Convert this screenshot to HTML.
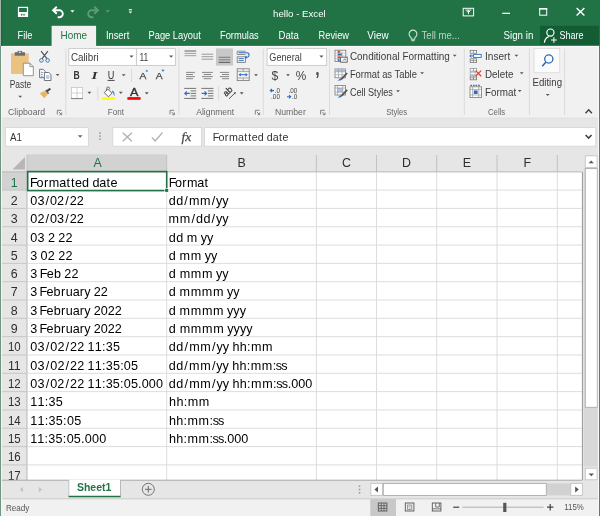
<!DOCTYPE html>
<html><head><meta charset="utf-8"><title>hello - Excel</title>
<style>
html,body{margin:0;padding:0;background:#e6e6e6;overflow:hidden}
body{width:600px;height:516px}
svg{display:block;font-family:"Liberation Sans",sans-serif;will-change:transform}
</style></head><body>
<svg width="600" height="516" viewBox="0 0 600 516">
<rect x="0" y="0" width="600" height="516" fill="#e6e6e6"/>
<rect x="0" y="0" width="600" height="46.4" fill="#217346"/>
<rect x="0" y="46.4" width="600" height="72" fill="#f1f1f1"/>
<rect x="0" y="45.9" width="600" height="1.3" fill="#fafafa"/>
<line x1="0" y1="118.2" x2="600" y2="118.2" stroke="#dcdcdc" stroke-width="0.8"/>
<rect x="540" y="25.8" width="58.9" height="19" fill="#135c34"/>
<rect x="18.5" y="7.4" width="9" height="9" fill="none" stroke="#fff" stroke-width="1.2"/>
<rect x="18.5" y="12" width="9" height="4.6" fill="#fff"/>
<rect x="20.9" y="13.9" width="1.4" height="1.6" fill="#217346"/>
<rect x="23.3" y="13.9" width="1.4" height="1.6" fill="#217346"/>
<path d="M53.3 10.3h6a3.5 3.5 0 0 1 0 7h-1.6" fill="none" stroke="#fff" stroke-width="1.9"/>
<path d="M56.8 6.8l-3.7 3.5l3.7 3.5" fill="none" stroke="#fff" stroke-width="1.9"/>
<path d="M70.30000000000001 10.25h4.2l-2.1 2.3z" fill="#fff"/>
<path d="M97.7 10.3h-6a3.5 3.5 0 0 0 0 7h1.6" fill="none" stroke="#5f9b7c" stroke-width="1.9"/>
<path d="M94.2 6.8l3.7 3.5l-3.7 3.5" fill="none" stroke="#5f9b7c" stroke-width="1.9"/>
<path d="M105.7 10.25h4.2l-2.1 2.3z" fill="#5f9b7c"/>
<rect x="128.8" y="9.2" width="3.2" height="1.1" fill="#fff"/>
<path d="M128.70000000000002 11.4h3.4l-1.7 2.2z" fill="#fff"/>
<text x="273.1" y="16.8" font-size="9.6" fill="#fff" textLength="52.6" lengthAdjust="spacingAndGlyphs">hello - Excel</text>
<rect x="463.2" y="8.3" width="10.4" height="7.6" fill="none" stroke="#fff" stroke-width="1"/>
<path d="M468.4 14.2v-3.6M466.6 12.2l1.8-1.8l1.8 1.8" fill="none" stroke="#fff" stroke-width="1"/>
<rect x="465.4" y="9.6" width="6" height="0.9" fill="#fff"/>
<line x1="502.2" y1="13.3" x2="510" y2="13.3" stroke="#fff" stroke-width="1.2"/>
<rect x="539.7" y="8.6" width="7" height="6.6" fill="none" stroke="#fff" stroke-width="1"/>
<rect x="539.2" y="8" width="8" height="1.6" fill="#fff"/>
<path d="M576.6 8l7.8 7.6M584.4 8l-7.8 7.6" fill="none" stroke="#fff" stroke-width="1.4"/>
<rect x="51.6" y="25.8" width="44.5" height="21.6" fill="#f1f1f1"/>
<text x="17.5" y="39.2" font-size="10.8" fill="#fff" textLength="15" lengthAdjust="spacingAndGlyphs">File</text>
<text x="60.5" y="39.2" font-size="10.8" fill="#217346" textLength="26.5" lengthAdjust="spacingAndGlyphs">Home</text>
<text x="105.9" y="39.2" font-size="10.8" fill="#fff" textLength="23.4" lengthAdjust="spacingAndGlyphs">Insert</text>
<text x="148.5" y="39.2" font-size="10.8" fill="#fff" textLength="52.3" lengthAdjust="spacingAndGlyphs">Page Layout</text>
<text x="220" y="39.2" font-size="10.8" fill="#fff" textLength="38.7" lengthAdjust="spacingAndGlyphs">Formulas</text>
<text x="278.6" y="39.2" font-size="10.8" fill="#fff" textLength="20.2" lengthAdjust="spacingAndGlyphs">Data</text>
<text x="318.6" y="39.2" font-size="10.8" fill="#fff" textLength="30.4" lengthAdjust="spacingAndGlyphs">Review</text>
<text x="367.3" y="39.2" font-size="10.8" fill="#fff" textLength="21.3" lengthAdjust="spacingAndGlyphs">View</text>
<path d="M410.7 37.2a3.9 3.9 0 1 1 4.6 0q-0.7 0.8 -0.7 2h-3.2q0 -1.2 -0.7 -2z" fill="none" stroke="#cfe3d7" stroke-width="1.1"/>
<line x1="411.3" y1="40.7" x2="414.7" y2="40.7" stroke="#cfe3d7" stroke-width="1.1"/>
<text x="421.6" y="39.2" font-size="10.8" fill="#b9d5c5" textLength="38.2" lengthAdjust="spacingAndGlyphs">Tell me...</text>
<text x="503.5" y="39.2" font-size="10.8" fill="#fff" textLength="29.8" lengthAdjust="spacingAndGlyphs">Sign in</text>
<circle cx="550.4" cy="32.6" r="3.6" fill="none" stroke="#fff" stroke-width="1.2"/>
<path d="M544.4 42.8q0.4-4.8 4.4-6.2" fill="none" stroke="#fff" stroke-width="1.2"/>
<path d="M551 40h5.8M553.9 37.1v5.8" fill="none" stroke="#fff" stroke-width="1"/>
<text x="559.5" y="39.2" font-size="10.8" fill="#fff" textLength="24" lengthAdjust="spacingAndGlyphs">Share</text>
<line x1="65.8" y1="48.8" x2="65.8" y2="115" stroke="#d8d8d8" stroke-width="0.9"/>
<line x1="178.9" y1="48.8" x2="178.9" y2="115" stroke="#d8d8d8" stroke-width="0.9"/>
<line x1="263.3" y1="48.8" x2="263.3" y2="115" stroke="#d8d8d8" stroke-width="0.9"/>
<line x1="329.5" y1="48.8" x2="329.5" y2="115" stroke="#d8d8d8" stroke-width="0.9"/>
<line x1="464.3" y1="48.8" x2="464.3" y2="115" stroke="#d8d8d8" stroke-width="0.9"/>
<line x1="529.4" y1="48.8" x2="529.4" y2="115" stroke="#d8d8d8" stroke-width="0.9"/>
<line x1="564.6" y1="48.8" x2="564.6" y2="115" stroke="#d8d8d8" stroke-width="0.9"/>
<rect x="11" y="53.2" width="17.7" height="20.8" fill="#eac282"/>
<rect x="14.7" y="52.2" width="10.3" height="3.5" fill="#6d6d6d"/>
<rect x="17.6" y="50.9" width="4.5" height="2.4" fill="#6d6d6d"/>
<rect x="18.9" y="51.7" width="1.9" height="1.2" fill="#f1f1f1"/>
<path d="M23.3 63.2h6.6l3.4 3.4v9.1h-10z" fill="#fff" stroke="#8a8a8a" stroke-width="0.9"/>
<path d="M29.9 63.2v3.4h3.4" fill="none" stroke="#8a8a8a" stroke-width="0.9"/>
<text x="9.7" y="87.5" font-size="10.5" fill="#3c3c3c" textLength="21.6" lengthAdjust="spacingAndGlyphs">Paste</text>
<path d="M18.3 95.65h3.8l-1.9 2.1z" fill="#555"/>
<path d="M41.1 51.2l6 7.6M47.9 51.2l-6 7.6" fill="none" stroke="#555" stroke-width="1.2"/>
<circle cx="41.4" cy="60.4" r="1.8" fill="none" stroke="#3a76c0" stroke-width="1"/>
<circle cx="47.6" cy="60.4" r="1.8" fill="none" stroke="#3a76c0" stroke-width="1"/>
<path d="M39.6 69.3h3.6l2 2v6.4h-5.6z" fill="#fff" stroke="#666" stroke-width="0.9"/>
<path d="M44.4 72.5h4.4l2.2 2.2v5.8h-6.6z" fill="#fff" stroke="#666" stroke-width="0.9"/>
<path d="M40.9 72.4h2.4M40.9 74.4h1.8M40.9 76.3h1.8M46 76h3.4M46 77.9h3.4" fill="none" stroke="#3a76c0" stroke-width="0.7"/>
<path d="M55.7 73.95h3.8l-1.9 2.1z" fill="#555"/>
<path d="M39.8 93.2l5.2-2.4l2.6 3.8l-3.4 3.6z" fill="#eab65a"/>
<path d="M45.2 90.4l1.4-0.9l2.6 3.8l-1.3 1z" fill="#666"/>
<path d="M46.8 91.2l3.6-2.6" fill="none" stroke="#444" stroke-width="2"/>
<text x="8" y="114.6" font-size="9.0" fill="#666" textLength="37.2" lengthAdjust="spacingAndGlyphs">Clipboard</text>
<path d="M61.5 110.3h-4.2v4.2" fill="none" stroke="#777" stroke-width="0.9"/>
<path d="M58.9 111.89999999999999l2.6 2.6M61.699999999999996 112.5v2.2h-2.2" fill="none" stroke="#777" stroke-width="0.9"/>
<rect x="68.8" y="48.6" width="67.6" height="16.8" fill="#fff" stroke="#c8c8c8" stroke-width="0.9"/>
<rect x="136.4" y="48.6" width="39" height="16.8" fill="#fff" stroke="#c8c8c8" stroke-width="0.9"/>
<text x="70.9" y="60.7" font-size="10.2" fill="#3c3c3c" textLength="27.8" lengthAdjust="spacingAndGlyphs">Calibri</text>
<path d="M129.5 55.5h4l-2.0 2.2z" fill="#555"/>
<text x="139.5" y="60.7" font-size="10.2" fill="#3c3c3c" textLength="8.8" lengthAdjust="spacingAndGlyphs">11</text>
<path d="M169.1 55.5h4l-2.0 2.2z" fill="#555"/>
<text x="73.6" y="78.9" font-size="10.6" fill="#333" textLength="6.2" lengthAdjust="spacingAndGlyphs" font-weight="bold">B</text>
<text x="91.6" y="78.9" font-size="10.8" fill="#333" font-weight="bold" font-style="italic" font-family="Liberation Serif,serif" textLength="6" lengthAdjust="spacingAndGlyphs">I</text>
<text x="107.8" y="78.9" font-size="10.4" fill="#333" textLength="6.6" lengthAdjust="spacingAndGlyphs">U</text>
<line x1="107.6" y1="80.4" x2="114.6" y2="80.4" stroke="#333" stroke-width="0.9"/>
<path d="M121.8 74.15h3.8l-1.9 2.1z" fill="#555"/>
<line x1="131.5" y1="68.6" x2="131.5" y2="82" stroke="#d8d8d8" stroke-width="0.9"/>
<text x="139.5" y="78.9" font-size="9.8" fill="#444" textLength="6.9" lengthAdjust="spacingAndGlyphs" stroke="#444" stroke-width="0.25">A</text>
<path d="M145.4 71.5l1.4-2l1.4 2z" fill="#2b6cc4"/>
<text x="155.8" y="79.2" font-size="9.2" fill="#444" textLength="6.9" lengthAdjust="spacingAndGlyphs" stroke="#444" stroke-width="0.25">A</text>
<path d="M161.3 69.8h3.3l-1.65 1.9z" fill="#2b6cc4"/>
<rect x="71.4" y="87.4" width="11.2" height="11.2" fill="#fff" stroke="#c6c6c6" stroke-width="0.8"/>
<path d="M77 87.4v11.2M71.4 93h11.2" fill="none" stroke="#c6c6c6" stroke-width="0.8"/>
<line x1="71" y1="98.6" x2="83" y2="98.6" stroke="#777" stroke-width="0.9"/>
<path d="M87.5 91.85000000000001h3.8l-1.9 2.1z" fill="#555"/>
<line x1="97.8" y1="86.6" x2="97.8" y2="100.2" stroke="#d8d8d8" stroke-width="0.9"/>
<path d="M107.8 89l4.2 4.2l-3.6 3.6l-4.2-4.2z" fill="#fff" stroke="#555" stroke-width="0.9"/>
<path d="M106.6 91v-2.4q0-1.6 1.5-1.6q1.5 0 1.5 1.6v0.8" fill="none" stroke="#555" stroke-width="0.8"/>
<path d="M112.6 90.4q2.8 2.4 1.6 5.8q-0.4-3.2-2.2-4.4z" fill="#2b6cc4"/>
<rect x="101.9" y="97.1" width="13.2" height="2.7" fill="#ffff00"/>
<path d="M118.89999999999999 91.85000000000001h3.8l-1.9 2.1z" fill="#555"/>
<text x="130" y="95.7" font-size="10.8" fill="#333" textLength="8.4" lengthAdjust="spacingAndGlyphs" stroke="#333" stroke-width="0.35">A</text>
<rect x="127.4" y="97.1" width="13.2" height="2.7" fill="#ff0000"/>
<path d="M144.9 92.35000000000001h3.8l-1.9 2.1z" fill="#555"/>
<text x="107.8" y="114.6" font-size="9.0" fill="#666" textLength="16.1" lengthAdjust="spacingAndGlyphs">Font</text>
<path d="M174.2 110.3h-4.2v4.2" fill="none" stroke="#777" stroke-width="0.9"/>
<path d="M171.6 111.89999999999999l2.6 2.6M174.4 112.5v2.2h-2.2" fill="none" stroke="#777" stroke-width="0.9"/>
<line x1="184.5" y1="51" x2="196.2" y2="51" stroke="#555" stroke-width="0.9"/>
<line x1="184.5" y1="53.4" x2="196.2" y2="53.4" stroke="#8a8a8a" stroke-width="0.8"/>
<line x1="184.5" y1="55.7" x2="196.2" y2="55.7" stroke="#8a8a8a" stroke-width="0.8"/>
<line x1="201.6" y1="54.2" x2="213.2" y2="54.2" stroke="#8a8a8a" stroke-width="0.85"/>
<line x1="201.6" y1="56.7" x2="213.2" y2="56.7" stroke="#8a8a8a" stroke-width="0.85"/>
<line x1="201.6" y1="59.2" x2="213.2" y2="59.2" stroke="#8a8a8a" stroke-width="0.85"/>
<rect x="216" y="48.4" width="17" height="17.2" fill="#c8c8c8"/>
<line x1="218.7" y1="57.3" x2="230.3" y2="57.3" stroke="#666" stroke-width="0.8"/>
<line x1="218.7" y1="59.8" x2="230.3" y2="59.8" stroke="#666" stroke-width="0.8"/>
<line x1="218.7" y1="62.3" x2="230.3" y2="62.3" stroke="#444" stroke-width="0.9"/>
<path d="M245.6 51.2h-8.4v3.3h8.4" fill="none" stroke="#777" stroke-width="0.8"/>
<rect x="237.2" y="56.8" width="8.4" height="5.7" fill="none" stroke="#777" stroke-width="0.8"/>
<path d="M238.6 52.8h8.2a2.2 2.2 0 0 1 0 4.5h-1.2" fill="none" stroke="#2b6cc4" stroke-width="1.1"/>
<path d="M246.6 55.6l-2 1.7l2 1.7z" fill="#2b6cc4"/>
<path d="M238.6 58.6h5.2M238.6 60.6h5.2" fill="none" stroke="#2b6cc4" stroke-width="0.9"/>
<line x1="186.1" y1="72.4" x2="194.9" y2="72.4" stroke="#7a7a7a" stroke-width="0.9"/>
<line x1="186.1" y1="74.5" x2="193" y2="74.5" stroke="#7a7a7a" stroke-width="0.9"/>
<line x1="186.1" y1="76.6" x2="194.9" y2="76.6" stroke="#7a7a7a" stroke-width="0.9"/>
<line x1="186.1" y1="78.7" x2="193" y2="78.7" stroke="#7a7a7a" stroke-width="0.9"/>
<line x1="202" y1="72.4" x2="212.8" y2="72.4" stroke="#7a7a7a" stroke-width="0.9"/>
<line x1="203.6" y1="74.5" x2="211.2" y2="74.5" stroke="#7a7a7a" stroke-width="0.9"/>
<line x1="202" y1="76.6" x2="212.8" y2="76.6" stroke="#7a7a7a" stroke-width="0.9"/>
<line x1="203.6" y1="78.7" x2="211.2" y2="78.7" stroke="#7a7a7a" stroke-width="0.9"/>
<line x1="219.9" y1="72.4" x2="229.1" y2="72.4" stroke="#7a7a7a" stroke-width="0.9"/>
<line x1="222" y1="74.5" x2="229.1" y2="74.5" stroke="#7a7a7a" stroke-width="0.9"/>
<line x1="219.9" y1="76.6" x2="229.1" y2="76.6" stroke="#7a7a7a" stroke-width="0.9"/>
<line x1="222" y1="78.7" x2="229.1" y2="78.7" stroke="#7a7a7a" stroke-width="0.9"/>
<rect x="237.2" y="68.8" width="12" height="11.8" fill="none" stroke="#777" stroke-width="0.8"/>
<path d="M237.2 71.4h12M237.2 78h12M243.2 68.8v2.6M243.2 78v2.6" fill="none" stroke="#888" stroke-width="0.7"/>
<path d="M239.6 74.7h7.2" fill="none" stroke="#2b6cc4" stroke-width="1"/>
<path d="M240.8 72.9l-2.2 1.8l2.2 1.8zM245.6 72.9l2.2 1.8l-2.2 1.8z" fill="#2b6cc4"/>
<path d="M254.1 74.25h3.8l-1.9 2.1z" fill="#555"/>
<line x1="184.2" y1="88.4" x2="196.2" y2="88.4" stroke="#666" stroke-width="0.9"/>
<line x1="184.2" y1="98.4" x2="196.2" y2="98.4" stroke="#666" stroke-width="0.9"/>
<line x1="190.7" y1="90.9" x2="196.2" y2="90.9" stroke="#666" stroke-width="0.9"/>
<line x1="190.7" y1="93.4" x2="196.2" y2="93.4" stroke="#666" stroke-width="0.9"/>
<line x1="190.7" y1="95.9" x2="196.2" y2="95.9" stroke="#666" stroke-width="0.9"/>
<path d="M184.79999999999998 93.4h5M186.79999999999998 91.4l-2 2l2 2" fill="none" stroke="#2b6cc4" stroke-width="1.1"/>
<line x1="201.4" y1="88.4" x2="213.4" y2="88.4" stroke="#666" stroke-width="0.9"/>
<line x1="201.4" y1="98.4" x2="213.4" y2="98.4" stroke="#666" stroke-width="0.9"/>
<line x1="207.9" y1="90.9" x2="213.4" y2="90.9" stroke="#666" stroke-width="0.9"/>
<line x1="207.9" y1="93.4" x2="213.4" y2="93.4" stroke="#666" stroke-width="0.9"/>
<line x1="207.9" y1="95.9" x2="213.4" y2="95.9" stroke="#666" stroke-width="0.9"/>
<path d="M201.70000000000002 93.4h5M204.6 91.4l2 2l-2 2" fill="none" stroke="#2b6cc4" stroke-width="1.1"/>
<line x1="218.7" y1="86.4" x2="218.7" y2="100.6" stroke="#d8d8d8" stroke-width="0.9"/>
<text x="0" y="0" font-size="8.8" fill="#333" stroke="#333" stroke-width="0.25" transform="translate(226.3,97) rotate(-45)">ab</text>
<path d="M229 98.8l6.4-6.2" fill="none" stroke="#555" stroke-width="1"/>
<path d="M235.9 92.1l-2.4 0.6l1.8 1.8z" fill="#555"/>
<path d="M239.79999999999998 92.35000000000001h3.8l-1.9 2.1z" fill="#555"/>
<text x="196.2" y="114.6" font-size="9.0" fill="#666" textLength="38" lengthAdjust="spacingAndGlyphs">Alignment</text>
<path d="M259.5 110.3h-4.2v4.2" fill="none" stroke="#777" stroke-width="0.9"/>
<path d="M256.90000000000003 111.89999999999999l2.6 2.6M259.7 112.5v2.2h-2.2" fill="none" stroke="#777" stroke-width="0.9"/>
<rect x="267.1" y="48.6" width="59.5" height="16.8" fill="#fff" stroke="#c8c8c8" stroke-width="0.9"/>
<text x="269.3" y="60.7" font-size="10.2" fill="#3c3c3c" textLength="32.6" lengthAdjust="spacingAndGlyphs">General</text>
<path d="M319.4 55.5h4l-2.0 2.2z" fill="#555"/>
<text x="271.6" y="79.9" font-size="13.2" fill="#444" textLength="6.8" lengthAdjust="spacingAndGlyphs">$</text>
<path d="M286.1 74.25h3.8l-1.9 2.1z" fill="#555"/>
<text x="295.7" y="79.6" font-size="12.2" fill="#444" textLength="10.5" lengthAdjust="spacingAndGlyphs">%</text>
<text x="315.3" y="75.2" font-size="17.5" fill="#444" textLength="4.4" lengthAdjust="spacingAndGlyphs" font-weight="bold">,</text>
<text x="274.6" y="92.9" font-size="6.7" fill="#444" textLength="5.4" lengthAdjust="spacingAndGlyphs">.0</text>
<text x="271" y="98.8" font-size="6.7" fill="#444" textLength="9" lengthAdjust="spacingAndGlyphs">.00</text>
<path d="M270.4 90.6h3.6M272 89l-1.7 1.6l1.7 1.6" fill="none" stroke="#2b6cc4" stroke-width="1.1"/>
<text x="288.6" y="92.9" font-size="6.7" fill="#444" textLength="8.8" lengthAdjust="spacingAndGlyphs">.00</text>
<text x="292" y="98.8" font-size="6.7" fill="#444" textLength="5.4" lengthAdjust="spacingAndGlyphs">.0</text>
<path d="M287 96.8h3.6M289 95.2l1.7 1.6l-1.7 1.6" fill="none" stroke="#2b6cc4" stroke-width="1.1"/>
<text x="275" y="114.6" font-size="9.0" fill="#666" textLength="30.8" lengthAdjust="spacingAndGlyphs">Number</text>
<path d="M324.8 110.3h-4.2v4.2" fill="none" stroke="#777" stroke-width="0.9"/>
<path d="M322.20000000000005 111.89999999999999l2.6 2.6M325.0 112.5v2.2h-2.2" fill="none" stroke="#777" stroke-width="0.9"/>
<rect x="335" y="50.2" width="10.8" height="11.4" fill="#fff" stroke="#777" stroke-width="0.8"/>
<path d="M337.7 50.2v11.4M342.1 50.2v11.4M335 53.05h10.8M335 55.9h10.8M335 58.75h10.8" fill="none" stroke="#a0a0a0" stroke-width="0.6"/>
<rect x="337.9" y="50.7" width="2.4" height="2" fill="#e2452b"/>
<rect x="337.9" y="53.5" width="3.9" height="2" fill="#2b6cc4"/>
<rect x="337.9" y="56.4" width="2.4" height="2" fill="#e2452b"/>
<rect x="337.9" y="59.2" width="1.8" height="2" fill="#2b6cc4"/>
<rect x="340.6" y="57.2" width="6.6" height="5" fill="#fff" stroke="#555" stroke-width="0.9"/>
<path d="M342.6 60.6l2.6-1.8M345.2 58.8v1.8" fill="none" stroke="#555" stroke-width="0.7"/>
<rect x="335" y="69" width="10.4" height="8.8" fill="#fff" stroke="#777" stroke-width="0.8"/>
<rect x="335.3" y="69.3" width="9.8" height="2.4" fill="#a9c4e6"/>
<path d="M338.5 69v8.8M342 69v8.8M335 71.8h10.4M335 74.8h10.4" fill="none" stroke="#999" stroke-width="0.7"/>
<path d="M340 80.8l1.4-3l5.2-5.4l1.2 1.2l-5 5.4z" fill="#555"/>
<path d="M337.6 81l2.6-2.8l1.6 1.6z" fill="#2b6cc4"/>
<rect x="335" y="85.4" width="10.4" height="9.6" fill="#fff" stroke="#777" stroke-width="0.8"/>
<rect x="337.6" y="88" width="5.2" height="4.2" fill="#a9c4e6"/>
<path d="M337.6 85.4v9.6M342.8 85.4v9.6M335 88h10.4M335 92.2h10.4" fill="none" stroke="#999" stroke-width="0.7"/>
<path d="M340 97.6l1.4-3l5.2-5.4l1.2 1.2l-5 5.4z" fill="#555"/>
<path d="M337.6 98l2.6-2.8l1.6 1.6z" fill="#2b6cc4"/>
<text x="349.9" y="60" font-size="10.3" fill="#3c3c3c" textLength="100" lengthAdjust="spacingAndGlyphs">Conditional Formatting</text>
<path d="M452.8 54.650000000000006h3.8l-1.9 2.1z" fill="#555"/>
<text x="349.9" y="77.8" font-size="10.3" fill="#3c3c3c" textLength="67" lengthAdjust="spacingAndGlyphs">Format as Table</text>
<path d="M420.20000000000005 72.25h3.8l-1.9 2.1z" fill="#555"/>
<text x="349.9" y="95.6" font-size="10.3" fill="#3c3c3c" textLength="42.9" lengthAdjust="spacingAndGlyphs">Cell Styles</text>
<path d="M396.1 90.25h3.8l-1.9 2.1z" fill="#555"/>
<text x="386.2" y="114.6" font-size="9.0" fill="#666" textLength="20.9" lengthAdjust="spacingAndGlyphs">Styles</text>
<rect x="470.2" y="50.4" width="6.4" height="2.8" fill="#fff" stroke="#777" stroke-width="0.8"/>
<rect x="473.6" y="54.4" width="7.6" height="3" fill="#fff" stroke="#2b6cc4" stroke-width="0.9"/>
<path d="M469.8 55.9h3.4M471.4 54.4l-1.6 1.5l1.6 1.5" fill="none" stroke="#2b6cc4" stroke-width="1"/>
<rect x="470.2" y="58.8" width="6.4" height="3.6" fill="#fff" stroke="#777" stroke-width="0.8"/>
<path d="M473.4 50.4v2.8M473.4 58.8v3.6M470.2 60.6h6.4" fill="none" stroke="#777" stroke-width="0.7"/>
<rect x="470.2" y="68.4" width="6.4" height="2.8" fill="#fff" stroke="#999" stroke-width="0.8"/>
<rect x="470.2" y="72.2" width="5" height="2.6" fill="#fff" stroke="#9ab" stroke-width="0.8"/>
<rect x="470.2" y="76" width="6.4" height="3.8" fill="#fff" stroke="#777" stroke-width="0.8"/>
<path d="M473.4 76v3.8M470.2 77.9h6.4M473.4 68.4v2.8" fill="none" stroke="#777" stroke-width="0.7"/>
<path d="M475.6 70.6l5.6 5.6M481.2 70.6l-5.6 5.6" fill="none" stroke="#e2452b" stroke-width="1.3"/>
<path d="M470.4 85.4h9.6" fill="none" stroke="#2b6cc4" stroke-width="1.2" stroke-dasharray="1.6 1"/>
<rect x="470" y="86.8" width="11.4" height="10.8" fill="#fff" stroke="#777" stroke-width="0.8"/>
<path d="M472.6 86.8v10.8M478.8 86.8v10.8M470 89.4h11.4M470 95h11.4" fill="none" stroke="#999" stroke-width="0.7"/>
<rect x="473.8" y="90.4" width="3.8" height="3.6" fill="#2b6cc4"/>
<text x="485" y="60" font-size="10.3" fill="#3c3c3c" textLength="25.2" lengthAdjust="spacingAndGlyphs">Insert</text>
<path d="M514.5 54.650000000000006h3.8l-1.9 2.1z" fill="#555"/>
<text x="485" y="77.8" font-size="10.3" fill="#3c3c3c" textLength="28.4" lengthAdjust="spacingAndGlyphs">Delete</text>
<path d="M519.8000000000001 72.25h3.8l-1.9 2.1z" fill="#555"/>
<text x="485" y="95.6" font-size="10.3" fill="#3c3c3c" textLength="31.2" lengthAdjust="spacingAndGlyphs">Format</text>
<path d="M517.8000000000001 89.95h3.8l-1.9 2.1z" fill="#555"/>
<text x="488" y="114.6" font-size="9.0" fill="#666" textLength="17.2" lengthAdjust="spacingAndGlyphs">Cells</text>
<rect x="534" y="48.5" width="25.7" height="24.2" fill="#fbfbfb" stroke="#dcdcdc" stroke-width="0.9"/>
<circle cx="548.8" cy="59" r="4.1" fill="none" stroke="#2b66b0" stroke-width="1.3"/>
<line x1="545.8" y1="62.2" x2="542.2" y2="66.2" stroke="#2b66b0" stroke-width="1.5"/>
<text x="532.5" y="86.3" font-size="10.2" fill="#3c3c3c" textLength="29.5" lengthAdjust="spacingAndGlyphs">Editing</text>
<path d="M545.8000000000001 93.95h3.8l-1.9 2.1z" fill="#555"/>
<path d="M585.5 113.2l3.2-3.4l3.2 3.4" fill="none" stroke="#444" stroke-width="1.5"/>
<rect x="5.4" y="127.6" width="83" height="18.6" fill="#fff" stroke="#d6d6d6" stroke-width="0.9"/>
<text x="10" y="140.5" font-size="10.6" fill="#333" textLength="12" lengthAdjust="spacingAndGlyphs">A1</text>
<path d="M77.9 135.25h4.6l-2.3 2.5z" fill="#666"/>
<rect x="99.3" y="132.25" width="1.5" height="1.5" fill="#959595"/>
<rect x="99.3" y="135.35" width="1.5" height="1.5" fill="#959595"/>
<rect x="99.3" y="138.45" width="1.5" height="1.5" fill="#959595"/>
<rect x="112.8" y="127.6" width="88.8" height="18.6" fill="#fff" stroke="#d6d6d6" stroke-width="0.9"/>
<path d="M122.7 132.7l9.2 8.6M131.9 132.7l-9.2 8.6" fill="none" stroke="#b0b0b0" stroke-width="1.3"/>
<path d="M151.9 137.4l3.2 3.6l7.4-8.4" fill="none" stroke="#b0b0b0" stroke-width="1.4"/>
<text x="181.6" y="140.6" font-size="12.5" fill="#4a4a4a" stroke="#4a4a4a" stroke-width="0.25" font-style="italic" font-family="Liberation Serif,serif" textLength="9.8" lengthAdjust="spacingAndGlyphs">fx</text>
<rect x="204.4" y="127.6" width="391.4" height="18.6" fill="#fff" stroke="#d6d6d6" stroke-width="0.9"/>
<text y="140.6" font-size="10.7" fill="#333" x="212.72 218.41 224.81 228.94 238.01 244.33 248.31 251.76 257.84 263.79 266.76 272.72 279.05 282.5">Formatted date</text>
<path d="M585.6 135l3 3l3-3" fill="none" stroke="#444" stroke-width="1.6"/>
<rect x="1.6" y="154.3" width="581" height="17.7" fill="#e6e6e6"/>
<rect x="27" y="172" width="555.4" height="308.0" fill="#fff"/>
<rect x="27" y="154.3" width="139.7" height="17.7" fill="#d2d2d2"/>
<rect x="1.6" y="172.2" width="25.4" height="18.12" fill="#d2d2d2"/>
<path d="M25 157v12.6h-12.6z" fill="#b6b6b6"/>
<line x1="166.7" y1="155" x2="166.7" y2="172" stroke="#bdbdbd" stroke-width="0.9"/>
<line x1="316.4" y1="155" x2="316.4" y2="172" stroke="#bdbdbd" stroke-width="0.9"/>
<line x1="376.5" y1="155" x2="376.5" y2="172" stroke="#bdbdbd" stroke-width="0.9"/>
<line x1="436.7" y1="155" x2="436.7" y2="172" stroke="#bdbdbd" stroke-width="0.9"/>
<line x1="497.0" y1="155" x2="497.0" y2="172" stroke="#bdbdbd" stroke-width="0.9"/>
<line x1="557.3" y1="155" x2="557.3" y2="172" stroke="#bdbdbd" stroke-width="0.9"/>
<line x1="27" y1="155" x2="27" y2="172" stroke="#bdbdbd" stroke-width="0.9"/>
<line x1="1.6" y1="171.9" x2="582.4" y2="171.9" stroke="#b0b0b0" stroke-width="0.9"/>
<line x1="27" y1="172" x2="27" y2="480.0" stroke="#b0b0b0" stroke-width="0.9"/>
<line x1="166.7" y1="172.4" x2="166.7" y2="480.0" stroke="#d9d9d9" stroke-width="0.9"/>
<line x1="316.4" y1="172.4" x2="316.4" y2="480.0" stroke="#d9d9d9" stroke-width="0.9"/>
<line x1="376.5" y1="172.4" x2="376.5" y2="480.0" stroke="#d9d9d9" stroke-width="0.9"/>
<line x1="436.7" y1="172.4" x2="436.7" y2="480.0" stroke="#d9d9d9" stroke-width="0.9"/>
<line x1="497.0" y1="172.4" x2="497.0" y2="480.0" stroke="#d9d9d9" stroke-width="0.9"/>
<line x1="557.3" y1="172.4" x2="557.3" y2="480.0" stroke="#d9d9d9" stroke-width="0.9"/>
<line x1="1.6" y1="190.1" x2="27" y2="190.1" stroke="#c4c4c4" stroke-width="0.9"/>
<line x1="27" y1="190.1" x2="582.4" y2="190.1" stroke="#d9d9d9" stroke-width="0.9"/>
<line x1="1.6" y1="208.42" x2="27" y2="208.42" stroke="#c4c4c4" stroke-width="0.9"/>
<line x1="27" y1="208.42" x2="582.4" y2="208.42" stroke="#d9d9d9" stroke-width="0.9"/>
<line x1="1.6" y1="226.74" x2="27" y2="226.74" stroke="#c4c4c4" stroke-width="0.9"/>
<line x1="27" y1="226.74" x2="582.4" y2="226.74" stroke="#d9d9d9" stroke-width="0.9"/>
<line x1="1.6" y1="245.06" x2="27" y2="245.06" stroke="#c4c4c4" stroke-width="0.9"/>
<line x1="27" y1="245.06" x2="582.4" y2="245.06" stroke="#d9d9d9" stroke-width="0.9"/>
<line x1="1.6" y1="263.38" x2="27" y2="263.38" stroke="#c4c4c4" stroke-width="0.9"/>
<line x1="27" y1="263.38" x2="582.4" y2="263.38" stroke="#d9d9d9" stroke-width="0.9"/>
<line x1="1.6" y1="281.7" x2="27" y2="281.7" stroke="#c4c4c4" stroke-width="0.9"/>
<line x1="27" y1="281.7" x2="582.4" y2="281.7" stroke="#d9d9d9" stroke-width="0.9"/>
<line x1="1.6" y1="300.02" x2="27" y2="300.02" stroke="#c4c4c4" stroke-width="0.9"/>
<line x1="27" y1="300.02" x2="582.4" y2="300.02" stroke="#d9d9d9" stroke-width="0.9"/>
<line x1="1.6" y1="318.34000000000003" x2="27" y2="318.34000000000003" stroke="#c4c4c4" stroke-width="0.9"/>
<line x1="27" y1="318.34000000000003" x2="582.4" y2="318.34000000000003" stroke="#d9d9d9" stroke-width="0.9"/>
<line x1="1.6" y1="336.65999999999997" x2="27" y2="336.65999999999997" stroke="#c4c4c4" stroke-width="0.9"/>
<line x1="27" y1="336.65999999999997" x2="582.4" y2="336.65999999999997" stroke="#d9d9d9" stroke-width="0.9"/>
<line x1="1.6" y1="354.98" x2="27" y2="354.98" stroke="#c4c4c4" stroke-width="0.9"/>
<line x1="27" y1="354.98" x2="582.4" y2="354.98" stroke="#d9d9d9" stroke-width="0.9"/>
<line x1="1.6" y1="373.29999999999995" x2="27" y2="373.29999999999995" stroke="#c4c4c4" stroke-width="0.9"/>
<line x1="27" y1="373.29999999999995" x2="582.4" y2="373.29999999999995" stroke="#d9d9d9" stroke-width="0.9"/>
<line x1="1.6" y1="391.62" x2="27" y2="391.62" stroke="#c4c4c4" stroke-width="0.9"/>
<line x1="27" y1="391.62" x2="582.4" y2="391.62" stroke="#d9d9d9" stroke-width="0.9"/>
<line x1="1.6" y1="409.94" x2="27" y2="409.94" stroke="#c4c4c4" stroke-width="0.9"/>
<line x1="27" y1="409.94" x2="582.4" y2="409.94" stroke="#d9d9d9" stroke-width="0.9"/>
<line x1="1.6" y1="428.26" x2="27" y2="428.26" stroke="#c4c4c4" stroke-width="0.9"/>
<line x1="27" y1="428.26" x2="582.4" y2="428.26" stroke="#d9d9d9" stroke-width="0.9"/>
<line x1="1.6" y1="446.58000000000004" x2="27" y2="446.58000000000004" stroke="#c4c4c4" stroke-width="0.9"/>
<line x1="27" y1="446.58000000000004" x2="582.4" y2="446.58000000000004" stroke="#d9d9d9" stroke-width="0.9"/>
<line x1="1.6" y1="464.9" x2="27" y2="464.9" stroke="#c4c4c4" stroke-width="0.9"/>
<line x1="27" y1="464.9" x2="582.4" y2="464.9" stroke="#d9d9d9" stroke-width="0.9"/>
<text x="97.6" y="167.3" font-size="12.4" fill="#217346" text-anchor="middle">A</text>
<text x="241.6" y="167.3" font-size="12.4" fill="#2e2e2e" text-anchor="middle">B</text>
<text x="346.5" y="167.3" font-size="12.4" fill="#2e2e2e" text-anchor="middle">C</text>
<text x="406.6" y="167.3" font-size="12.4" fill="#2e2e2e" text-anchor="middle">D</text>
<text x="466.9" y="167.3" font-size="12.4" fill="#2e2e2e" text-anchor="middle">E</text>
<text x="527.2" y="167.3" font-size="12.4" fill="#2e2e2e" text-anchor="middle">F</text>
<text x="14.3" y="186.6" font-size="12.4" fill="#217346" text-anchor="middle">1</text>
<text x="14.3" y="204.91" font-size="12.4" fill="#2e2e2e" text-anchor="middle">2</text>
<text x="14.3" y="223.22" font-size="12.4" fill="#2e2e2e" text-anchor="middle">3</text>
<text x="14.3" y="241.52999999999997" font-size="12.4" fill="#2e2e2e" text-anchor="middle">4</text>
<text x="14.3" y="259.84" font-size="12.4" fill="#2e2e2e" text-anchor="middle">5</text>
<text x="14.3" y="278.15" font-size="12.4" fill="#2e2e2e" text-anchor="middle">6</text>
<text x="14.3" y="296.46" font-size="12.4" fill="#2e2e2e" text-anchor="middle">7</text>
<text x="14.3" y="314.77" font-size="12.4" fill="#2e2e2e" text-anchor="middle">8</text>
<text x="14.3" y="333.08" font-size="12.4" fill="#2e2e2e" text-anchor="middle">9</text>
<text x="14.3" y="351.39" font-size="12.4" fill="#2e2e2e" textLength="12.8" lengthAdjust="spacingAndGlyphs" text-anchor="middle">10</text>
<text x="14.3" y="369.7" font-size="12.4" fill="#2e2e2e" textLength="12.8" lengthAdjust="spacingAndGlyphs" text-anchor="middle">11</text>
<text x="14.3" y="388.01" font-size="12.4" fill="#2e2e2e" textLength="12.8" lengthAdjust="spacingAndGlyphs" text-anchor="middle">12</text>
<text x="14.3" y="406.31999999999994" font-size="12.4" fill="#2e2e2e" textLength="12.8" lengthAdjust="spacingAndGlyphs" text-anchor="middle">13</text>
<text x="14.3" y="424.63" font-size="12.4" fill="#2e2e2e" textLength="12.8" lengthAdjust="spacingAndGlyphs" text-anchor="middle">14</text>
<text x="14.3" y="442.93999999999994" font-size="12.4" fill="#2e2e2e" textLength="12.8" lengthAdjust="spacingAndGlyphs" text-anchor="middle">15</text>
<text x="14.3" y="461.25" font-size="12.4" fill="#2e2e2e" textLength="12.8" lengthAdjust="spacingAndGlyphs" text-anchor="middle">16</text>
<text x="14.3" y="479.55999999999995" font-size="12.4" fill="#2e2e2e" textLength="12.8" lengthAdjust="spacingAndGlyphs" text-anchor="middle">17</text>
<text y="186.6" font-size="12.6" fill="#000" x="29.97 36.5 43.91 48.64 59.15 66.49 71.09 75.05 82.07 88.98 92.38 99.28 106.62 110.58">Formatted date</text>
<text y="204.91" font-size="12.6" fill="#000" x="30.21 37.49 45.5 50.01 57.12 65.13 69.63 76.74">03/02/22</text>
<text y="223.22" font-size="12.6" fill="#000" x="30.21 37.49 45.5 50.01 57.12 65.13 69.63 76.74">02/03/22</text>
<text y="241.53" font-size="12.6" fill="#000" x="30.21 37.59 44.53 47.96 54.9 58.34 65.51">03 2 22</text>
<text y="259.84" font-size="12.6" fill="#000" x="30.22 37.12 40.59 47.82 54.8 58.27 65.49">3 02 22</text>
<text y="278.15" font-size="12.6" fill="#000" x="30.22 36.99 39.7 46.75 53.93 60.95 64.33 71.44">3 Feb 22</text>
<text y="296.46" font-size="12.6" fill="#000" x="30.22 36.9 39.55 46.52 53.61 61.07 65.72 72.68 79.82 84.32 90.43 93.75 100.77">3 February 22</text>
<text y="314.77" font-size="12.6" fill="#000" x="30.22 36.9 39.56 46.54 53.63 61.09 65.75 72.71 79.85 84.36 90.46 93.79 100.82 107.84 114.87">3 February 2022</text>
<text y="333.08" font-size="12.6" fill="#000" x="30.22 36.9 39.56 46.54 53.63 61.09 65.75 72.71 79.85 84.36 90.46 93.79 100.82 107.84 114.87">3 February 2022</text>
<text y="351.39" font-size="12.6" fill="#000" x="30.21 37.6 45.67 50.24 57.42 65.5 70.07 77.24 84.19 87.62 94.8 102.04 105.77 112.94">03/02/22 11:35</text>
<text y="369.7" font-size="12.6" fill="#000" x="30.21 37.59 45.67 50.23 57.41 65.48 70.05 77.22 84.16 87.6 94.77 102.01 105.73 112.91 120.14 123.87 131.05">03/02/22 11:35:05</text>
<text y="388.01" font-size="12.6" fill="#000" x="30.21 37.58 45.64 50.2 57.37 65.44 70.0 77.16 84.09 87.52 94.69 101.91 105.64 112.8 120.03 123.75 130.91 138.04 141.65 148.81 155.98">03/02/22 11:35:05.000</text>
<text y="406.32" font-size="12.6" fill="#000" x="30.24 37.38 44.7 48.52 55.8">11:35</text>
<text y="424.63" font-size="12.6" fill="#000" x="30.24 37.38 44.7 48.51 55.79 63.11 66.92 74.2">11:35:05</text>
<text y="442.94" font-size="12.6" fill="#000" x="30.24 37.31 44.58 48.35 55.58 62.86 66.63 73.86 81.03 84.69 91.92 99.15">11:35:05.000</text>
<text y="186.6" font-size="12.6" fill="#000" x="168.67 175.04 182.35 186.93 197.29 204.53">Format</text>
<text y="204.91" font-size="12.6" fill="#000" x="168.77 176.19 184.24 188.93 199.98 211.66 216.06 222.32">dd/mm/yy</text>
<text y="223.22" font-size="12.6" fill="#000" x="168.46 179.75 191.51 196.11 203.43 211.54 215.98 222.29">mm/dd/yy</text>
<text y="241.53" font-size="12.6" fill="#000" x="168.77 176.25 183.23 186.86 197.48 200.8 207.1">dd m yy</text>
<text y="259.84" font-size="12.6" fill="#000" x="168.77 175.96 179.62 190.77 201.43 204.76 211.09">d mm yy</text>
<text y="278.15" font-size="12.6" fill="#000" x="168.77 175.97 179.63 190.79 201.96 212.61 215.96 222.28">d mmm yy</text>
<text y="296.46" font-size="12.6" fill="#000" x="168.77 175.95 179.59 190.73 201.87 213.01 223.65 226.98 233.29">d mmmm yy</text>
<text y="314.77" font-size="12.6" fill="#000" x="168.77 175.96 179.61 190.76 201.91 213.06 223.71 227.05 233.37 239.69">d mmmm yyy</text>
<text y="333.08" font-size="12.6" fill="#000" x="168.77 175.99 179.66 190.85 202.04 213.23 223.9 227.26 233.6 239.94 246.28">d mmmm yyyy</text>
<text y="351.39" font-size="12.6" fill="#000" x="168.77 176.28 184.38 189.15 200.28 212.04 216.48 222.79 228.92 232.4 239.73 247.01 250.94 262.08">dd/mm/yy hh:mm</text>
<text y="369.7" font-size="12.6" fill="#000" x="168.77 176.25 184.33 189.07 200.17 211.9 216.33 222.62 228.74 232.2 239.51 246.77 250.68 261.78 272.69 275.87 281.3">dd/mm/yy hh:mm:ss</text>
<text y="388.01" font-size="12.6" fill="#000" x="168.77 176.29 184.4 189.17 200.31 212.07 216.53 222.84 228.97 232.46 239.79 247.08 251.02 262.16 273.1 276.29 281.75 287.64 291.18 298.25 305.32">dd/mm/yy hh:mm:ss.000</text>
<text y="406.32" font-size="12.6" fill="#000" x="169.03 176.44 183.74 187.69 198.86">hh:mm</text>
<text y="424.63" font-size="12.6" fill="#000" x="169.03 176.36 183.62 187.52 198.61 209.51 212.68 218.1">hh:mm:ss</text>
<text y="442.94" font-size="12.6" fill="#000" x="169.03 176.34 183.58 187.46 198.52 209.39 212.55 217.96 223.82 227.32 234.33 241.35">hh:mm:ss.000</text>
<rect x="1.6" y="480.0" width="598" height="36" fill="#e6e6e6"/>
<rect x="27.7" y="171.6" width="139" height="19" fill="none" stroke="#217346" stroke-width="1.6"/>
<rect x="164.4" y="188.1" width="4.5" height="4.5" fill="#fff"/>
<rect x="165.1" y="188.8" width="3.1" height="3.1" fill="#217346"/>
<rect x="582.4" y="154.3" width="16.2" height="325.7" fill="#e6e6e6"/>
<line x1="582.4" y1="172" x2="582.4" y2="480.0" stroke="#9a9a9a" stroke-width="1"/>
<rect x="583.6" y="168.4" width="14.8" height="298" fill="#d8d8d8"/>
<rect x="585.3" y="155.8" width="11.8" height="11.6" fill="#fff" stroke="#c4c4c4" stroke-width="0.9"/>
<path d="M588.6 163.2l2.6-2.8l2.6 2.8z" fill="#555"/>
<rect x="585.3" y="168.6" width="12" height="238.7" fill="#fff" stroke="#ababab" stroke-width="0.9"/>
<rect x="585.3" y="468.2" width="11.8" height="11.6" fill="#fff" stroke="#c4c4c4" stroke-width="0.9"/>
<path d="M588.6 473.4h5.4l-2.7 2.8z" fill="#555"/>
<line x1="1.6" y1="480.2" x2="582.4" y2="480.2" stroke="#a8a8a8" stroke-width="1"/>
<rect x="69.2" y="479.6" width="50.9" height="16.4" fill="#fff"/>
<line x1="120.5" y1="480" x2="120.5" y2="496.4" stroke="#b4b4b4" stroke-width="0.9"/>
<line x1="68.8" y1="480" x2="68.8" y2="496.4" stroke="#c4c4c4" stroke-width="0.9"/>
<line x1="68.6" y1="496.5" x2="120.6" y2="496.5" stroke="#217346" stroke-width="1.5"/>
<text x="76.9" y="491.2" font-size="11.4" fill="#217346" textLength="34.4" lengthAdjust="spacingAndGlyphs" font-weight="bold">Sheet1</text>
<path d="M23 487l-3.4 2.6l3.4 2.6z" fill="#c4c4c4"/>
<path d="M38.8 487l3.4 2.6l-3.4 2.6z" fill="#c4c4c4"/>
<circle cx="148.3" cy="489.3" r="6" fill="none" stroke="#6a6a6a" stroke-width="0.9"/>
<path d="M145 489.3h6.6M148.3 486v6.6" fill="none" stroke="#6a6a6a" stroke-width="1"/>
<rect x="358.8" y="485.45" width="1.5" height="1.5" fill="#959595"/>
<rect x="358.8" y="488.75" width="1.5" height="1.5" fill="#959595"/>
<rect x="358.8" y="492.05" width="1.5" height="1.5" fill="#959595"/>
<rect x="383" y="483.4" width="188" height="12" fill="#d2d2d2"/>
<rect x="370.8" y="483.4" width="11.6" height="12" fill="#fff" stroke="#c4c4c4" stroke-width="0.9"/>
<path d="M378 486.4v6l-3.6-3z" fill="#555"/>
<rect x="383.3" y="483.4" width="163" height="12" fill="#fff" stroke="#ababab" stroke-width="0.9"/>
<rect x="570.8" y="483.4" width="11.6" height="12" fill="#fff" stroke="#c4c4c4" stroke-width="0.9"/>
<path d="M575.2 486.4v6l3.6-3z" fill="#555"/>
<rect x="1.6" y="498.6" width="597" height="17.4" fill="#f1f1f1"/>
<line x1="1.6" y1="498.8" x2="598.4" y2="498.8" stroke="#c6c6c6" stroke-width="0.9"/>
<text x="6" y="510.6" font-size="9" fill="#555" textLength="23.4" lengthAdjust="spacingAndGlyphs">Ready</text>
<rect x="370.3" y="499" width="25.7" height="17" fill="#c8c8c8"/>
<rect x="378.3" y="503" width="8.6" height="8" fill="none" stroke="#555" stroke-width="0.9"/>
<path d="M381.2 503v8M384 503v8M378.3 505.7h8.6M378.3 508.4h8.6" fill="none" stroke="#555" stroke-width="0.8"/>
<rect x="405.3" y="503" width="8.6" height="8" fill="none" stroke="#555" stroke-width="0.9"/>
<rect x="407.4" y="505" width="4.4" height="4.4" fill="none" stroke="#888" stroke-width="0.8"/>
<path d="M408.6 506.4h2M408.6 508h2" fill="none" stroke="#888" stroke-width="0.6"/>
<rect x="432.3" y="503" width="8.6" height="8" fill="none" stroke="#555" stroke-width="0.9"/>
<path d="M435.7 503v4h3.6v-4M432.3 508.8h8.6" fill="none" stroke="#555" stroke-width="0.8"/>
<line x1="453.2" y1="507.2" x2="459.2" y2="507.2" stroke="#444" stroke-width="1.2"/>
<line x1="462.5" y1="507.2" x2="543.6" y2="507.2" stroke="#a6a6a6" stroke-width="0.9"/>
<rect x="503.2" y="502.8" width="3.2" height="9.2" fill="#555"/>
<path d="M547 507.2h6.4M550.2 504v6.4" fill="none" stroke="#444" stroke-width="1.2"/>
<text x="564.3" y="510.4" font-size="9.2" fill="#555" textLength="19.5" lengthAdjust="spacingAndGlyphs">115%</text>
<rect x="0" y="0" width="1.1" height="46" fill="#a3b5aa"/>
<rect x="1.1" y="0" width="1.2" height="46" fill="#16693d"/>
<rect x="0" y="46" width="1.1" height="470" fill="#6f9681"/>
<rect x="1.1" y="46" width="0.9" height="470" fill="#f4f8f5"/>
<rect x="598.9" y="46" width="1.1" height="470" fill="#3e8c62"/>
<rect x="597.9" y="46" width="1.0" height="470" fill="#fbfbfb"/>
</svg>
</body></html>
